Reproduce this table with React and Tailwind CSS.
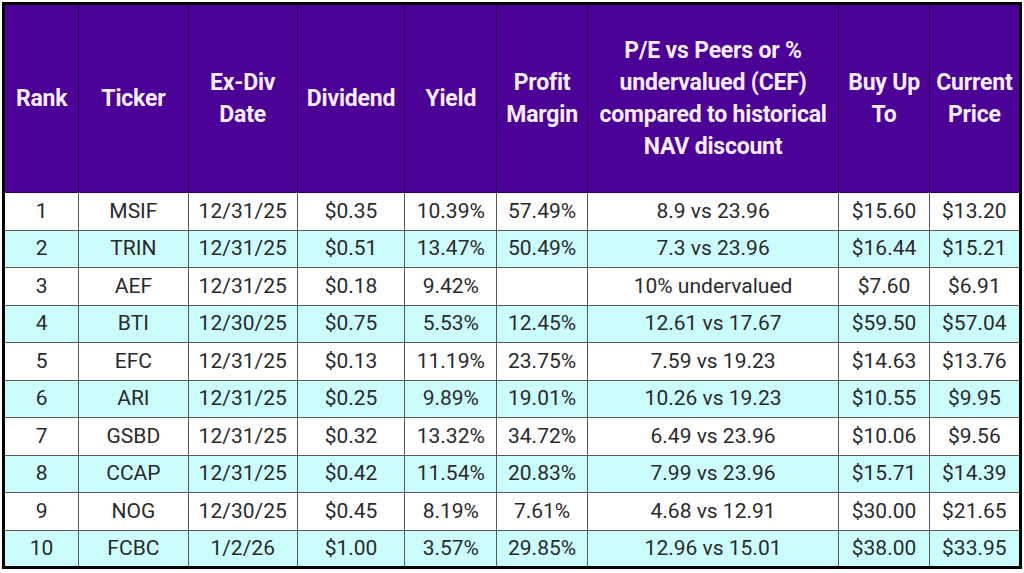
const rows = [
  { rank: 1, ticker: 'MSIF', date: '12/31/25', div: '$0.35', yld: '10.39%', margin: '57.49%', pe: '8.9 vs 23.96', buy: '$15.60', price: '$13.20' },
  { rank: 2, ticker: 'TRIN', date: '12/31/25', div: '$0.51', yld: '13.47%', margin: '50.49%', pe: '7.3 vs 23.96', buy: '$16.44', price: '$15.21' },
  { rank: 3, ticker: 'AEF', date: '12/31/25', div: '$0.18', yld: '9.42%', margin: '', pe: '10% undervalued', buy: '$7.60', price: '$6.91' },
  { rank: 4, ticker: 'BTI', date: '12/30/25', div: '$0.75', yld: '5.53%', margin: '12.45%', pe: '12.61 vs 17.67', buy: '$59.50', price: '$57.04' },
  { rank: 5, ticker: 'EFC', date: '12/31/25', div: '$0.13', yld: '11.19%', margin: '23.75%', pe: '7.59 vs 19.23', buy: '$14.63', price: '$13.76' },
  { rank: 6, ticker: 'ARI', date: '12/31/25', div: '$0.25', yld: '9.89%', margin: '19.01%', pe: '10.26 vs 19.23', buy: '$10.55', price: '$9.95' },
  { rank: 7, ticker: 'GSBD', date: '12/31/25', div: '$0.32', yld: '13.32%', margin: '34.72%', pe: '6.49 vs 23.96', buy: '$10.06', price: '$9.56' },
  { rank: 8, ticker: 'CCAP', date: '12/31/25', div: '$0.42', yld: '11.54%', margin: '20.83%', pe: '7.99 vs 23.96', buy: '$15.71', price: '$14.39' },
  { rank: 9, ticker: 'NOG', date: '12/30/25', div: '$0.45', yld: '8.19%', margin: '7.61%', pe: '4.68 vs 12.91', buy: '$30.00', price: '$21.65' },
  { rank: 10, ticker: 'FCBC', date: '1/2/26', div: '$1.00', yld: '3.57%', margin: '29.85%', pe: '12.96 vs 15.01', buy: '$38.00', price: '$33.95' },
];

const headers = [
  { label: ['Rank'], w: 'w-[75px]' },
  { label: ['Ticker'], w: 'w-[109px]' },
  { label: ['Ex-Div', 'Date'], w: 'w-[109px]' },
  { label: ['Dividend'], w: 'w-[107px]' },
  { label: ['Yield'], w: 'w-[92px]' },
  { label: ['Profit', 'Margin'], w: 'w-[90px]' },
  { label: ['P/E vs Peers or %', 'undervalued (CEF)', 'compared to historical', 'NAV discount'], w: 'w-[251px]' },
  { label: ['Buy Up', 'To'], w: 'w-[90px]' },
  { label: ['Current', 'Price'], w: 'w-[91px]' },
];

export default function App() {
  return (
    <div className="w-[1024px] h-[573px] bg-white pt-[2px] pl-[2px]" style={{ fontFamily: 'Roboto, "Liberation Sans", sans-serif' }}>
      <table className="w-[1020px] table-fixed border-collapse border-[3px] border-black">
        <colgroup>
          {headers.map((h, i) => (
            <col key={i} className={h.w} />
          ))}
        </colgroup>
        <thead>
          <tr className="h-[189px] bg-[#4b0096]">
            {headers.map((h, i) => (
              <th
                key={i}
                className="border border-[#2c0058] p-0 text-center align-middle text-[23px] leading-[32px] font-bold text-[#f6eefe] whitespace-nowrap tracking-[-0.2px]"
              >
                {h.label.map((l, j) => (
                  <div key={j}>{l}</div>
                ))}
              </th>
            ))}
          </tr>
        </thead>
        <tbody>
          {rows.map((r, i) => (
            <tr key={r.rank} className={`h-[37.5px] ${i % 2 === 1 ? 'bg-[#ccfdfd]' : 'bg-white'}`}>
              {[r.rank, r.ticker, r.date, r.div, r.yld, r.margin, r.pe, r.buy, r.price].map((v, j) => (
                <td key={j} className="border border-[#5a5a5a] p-0 text-center align-middle text-[21px] text-[#2a2a2a] whitespace-nowrap">
                  {v}
                </td>
              ))}
            </tr>
          ))}
        </tbody>
      </table>
    </div>
  );
}
